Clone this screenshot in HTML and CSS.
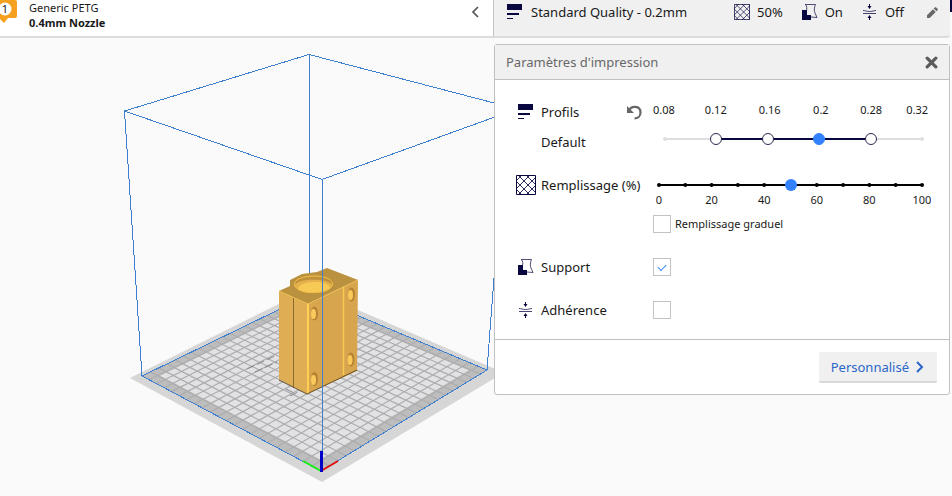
FILE: index.html
```html
<!DOCTYPE html>
<html lang="fr">
<head>
<meta charset="utf-8">
<meta name="viewport" content="width=device-width, initial-scale=1">
<title>Paramètres d'impression</title>
<link rel="stylesheet" href="styles.css">
</head>
<body>
<svg class="symbols" aria-hidden="true">
  <symbol id="i-profile" viewBox="0 0 16 16"><path d="M0 0h15v6H0zM0 9h12v2H0zM0 14h6v1H0z"/></symbol>
  <symbol id="i-infill" viewBox="0 0 20 20"><g fill="none" stroke="currentColor"><path d="M.5.5h19v19H.5z"/><path d="M0 6 6 0M0 14 14 0M2 20 20 2M10 20l10-10M18 20l2-2M0 14l6 6M0 6l14 14M2 0l18 18M10 0l10 10M18 0l2 2" stroke-opacity=".85"/></g></symbol>
  <symbol id="i-support" viewBox="0 0 16 16"><path d="M0 6h5v5h4v5H0z"/><path d="M3 .5h10.500c-1.500 3-1.500 6.500-.5 8.500l2 4.500-6-.5M3.500.5c1.500 2 1.500 4 1 6" fill="none" stroke="currentColor" stroke-opacity=".7"/></symbol>
  <symbol id="i-adhesion" viewBox="0 0 16 16"><path d="M1 6.500c2 0 3.500 1 6.500 1s4.500-1 6.500-1M1 9.500h13" fill="none" stroke="currentColor" stroke-opacity=".75"/><path d="M7 0h1v2h1.500l-2 3-2-3H7zM7 16h1v-2h1.500l-2-3-2 3H7z"/></symbol>
</svg>

<header class="topbar">
  <div class="material">
    <span class="extruder"><svg viewBox="0 0 24 24"><path d="M0 0h22a2 2 0 0 1 2 2v14a2 2 0 0 1-2 2h-7l-4 5-5-5H0z" fill="#f5a01e"/><circle cx="12" cy="9" r="6.500" fill="#fff"/></svg><b>1</b></span>
    <div class="material-text"><span>Generic PETG</span><strong>0.4mm Nozzle</strong></div>
    <button class="plain collapse" aria-label="Réduire"><svg viewBox="0 0 8 12"><path d="M7 1 2 6l5 5" fill="none" stroke="#555" stroke-width="1.700"/></svg></button>
  </div>
  <div class="summary">
    <svg class="icon"><use href="#i-profile"/></svg>
    <span class="quality">Standard Quality - 0.2mm</span>
    <span class="stat"><svg class="icon"><use href="#i-infill"/></svg>50%</span>
    <span class="stat"><svg class="icon"><use href="#i-support"/></svg>On</span>
    <span class="stat"><svg class="icon"><use href="#i-adhesion"/></svg>Off</span>
    <button class="plain edit" aria-label="Modifier"><svg viewBox="0 0 12 12"><path d="M0 12V9l6.500-6.500 3 3L3 12zM7.300 1.700 8.500.5a1 1 0 0 1 1.500 0L11.500 2a1 1 0 0 1 0 1.500l-1.200 1.200z" fill="#686868"/></svg></button>
  </div>
  <span class="edge-mark"></span>
</header>

<main class="stage">
  <svg class="scene" viewBox="0 38 952 458" preserveAspectRatio="xMinYMin slice" role="img" aria-label="Aperçu du modèle">
    <path d="M130 378 309 289l191 82v4L322 482z" fill="#d6d6d6"/>
    <path d="M142 376 309 295l178 75-166 101z" fill="#bdbdbd"/>
    <path id="inner" fill="#e2e2e4"/>
    <path id="grid" fill="none" stroke="#adadaf" stroke-width="1.200"/>
    <g class="volume">
      <path d="M142 376 309 295l178 75-166 101z"/>
      <path d="M309.500 54v241"/>
      <path d="M124.500 111 309 54.500 517 109 322 179.500z"/>
      <path d="M124.500 111 142 376M507 107 487 370"/>
    </g>
    <path d="M247 369l30-14m-22 17 22-10M286 389l10 5m-6 2 12-6" fill="none" stroke="#85878a" stroke-dasharray="8 3"/>
    <g>
      <path d="M279 291l11-5v-6l12-6 15-2 10-4 31 12-51 24z" fill="#b9913f"/>
      <path d="M279 291l29 13-1 90-28-15z" fill="#dfad54"/>
      <path d="M308 304l50-24-1 91-50 23z" fill="#d8a54f"/>
      <path d="M279 291l29 13 50-24" fill="none" stroke="#efbd50"/>
      <ellipse cx="313.500" cy="284" rx="19" ry="8.500" fill="#e5b14c"/>
      <path d="M295 282c0-8 37-8 37 0v3c-3-7-34-7-37 0z" fill="#c0913c"/>
      <path d="M298 289c2-9 30-9 32-1-5 6-26 7-32 1z" fill="#f7ca56"/>
      <path d="M294.500 284c0-10 38-11 38 0 0 11-38 12-38 0z" fill="none" stroke="#f0bd4b"/>
      <path d="M308 304v89" fill="none" stroke="#ffd054" stroke-width="2"/>
      <path d="M343.500 287v88" fill="none" stroke="#f9c851" stroke-width="1.500"/>
      <path d="M293.500 298v90" fill="none" stroke="#8d6b31"/>
      <path d="M279 380l28 14 50-24" fill="none" stroke="#675128"/>
      <g fill="#b68332"><ellipse cx="314.500" cy="313.500" rx="3.500" ry="7"/><ellipse cx="351.500" cy="294.500" rx="3.500" ry="7"/><ellipse cx="314.500" cy="379" rx="3.500" ry="7"/><ellipse cx="351" cy="359.500" rx="3.500" ry="7"/></g>
      <g fill="#f9ca5b"><ellipse cx="313.500" cy="314" rx="2.500" ry="5"/><ellipse cx="350.500" cy="295" rx="2.500" ry="5"/><ellipse cx="313.500" cy="380" rx="2.500" ry="5"/><ellipse cx="350" cy="360" rx="2.500" ry="5"/></g>
    </g>
    <path d="M322.500 179v292" class="volume"/>
    <g fill="none"><path d="M321 471l-18-10" stroke="#10f010" stroke-width="2"/><path d="M321 471l17-10" stroke="#e01010" stroke-width="2"/><path d="M321.500 472v-21" stroke="#0000c8" stroke-width="3"/></g>
  </svg>

  <section class="panel" aria-labelledby="panel-title">
    <div class="panel-head">
      <h1 id="panel-title">Paramètres d'impression</h1>
      <button class="plain close" aria-label="Fermer"><svg viewBox="0 0 12 12"><path d="m2 2 8 8M10 2l-8 8" stroke="#5c5c5c" stroke-width="3" stroke-linecap="round"/></svg></button>
    </div>
    <form class="settings">
      <div class="row">
        <svg class="icon"><use href="#i-profile"/></svg>
        <div class="names">
          <div class="name-line">Profils<button type="button" class="plain undo" aria-label="Réinitialiser"><svg viewBox="0 0 15 15"><path d="M2 5.500C4 .5 13.500 0 13.500 7.500c0 4-3 6-6 6" fill="none" stroke="#666" stroke-width="2.200"/><path d="M0 1v7h7z" fill="#666"/></svg></button></div>
          <div class="name-line">Default</div>
        </div>
        <div class="control">
          <div class="profile-scale"><span>0.08</span><span>0.12</span><span>0.16</span><span>0.2</span><span>0.28</span><span>0.32</span></div>
          <div class="profile-track" role="radiogroup" aria-label="Profils">
            <input type="radio" name="profile" aria-label="0.08" disabled>
            <input type="radio" name="profile" aria-label="0.12">
            <input type="radio" name="profile" aria-label="0.16">
            <input type="radio" name="profile" aria-label="0.2" checked>
            <input type="radio" name="profile" aria-label="0.28">
            <input type="radio" name="profile" aria-label="0.32" disabled>
          </div>
        </div>
      </div>
      <div class="row infill">
        <svg class="icon large"><use href="#i-infill"/></svg>
        <label class="name-line" for="infill">Remplissage (%)</label>
        <div class="control">
          <div class="range">
            <svg class="ticks" aria-hidden="true"></svg>
            <input type="range" id="infill" min="0" max="100" step="10" value="50">
          </div>
          <div class="infill-scale"><span>0</span><span>20</span><span>40</span><span>60</span><span>80</span><span>100</span></div>
          <label class="gradual"><input type="checkbox">Remplissage graduel</label>
        </div>
      </div>
      <div class="row">
        <svg class="icon"><use href="#i-support"/></svg>
        <label class="name-line" for="support">Support</label>
        <input type="checkbox" id="support" checked>
      </div>
      <div class="row">
        <svg class="icon"><use href="#i-adhesion"/></svg>
        <label class="name-line" for="adhesion">Adhérence</label>
        <input type="checkbox" id="adhesion">
      </div>
    </form>
    <div class="panel-foot">
      <button class="custom">Personnalisé<svg viewBox="0 0 8 12"><path d="m1 1 5 5-5 5" fill="none" stroke="#2a66c8" stroke-width="2"/></svg></button>
    </div>
  </section>
</main>
<script src="grid.js"></script>
</body>
</html>
```
FILE: styles.css
```css
* { box-sizing: border-box; }

body {
  margin: 0;
  min-height: 100vh;
  display: flex;
  flex-direction: column;
  background: #fafafa;
  color: #191919;
  font: 13px/18px "Noto Sans", sans-serif;
  overflow: hidden;
}

.symbols { position: absolute; width: 0; height: 0; }
.icon { width: 16px; height: 16px; color: #08073f; fill: #08073f; flex: none; }
.icon.large { width: 20px; height: 20px; }
.plain { border: 0; padding: 0; background: none; display: flex; }

.topbar {
  position: relative;
  display: grid;
  grid-template-columns: minmax(0, 1fr) 457px;
  height: 38px;
  padding-right: 2px;
}
.material, .summary { display: flex; border-bottom: 2px solid #dcdcdc; }
.material { background: #fff; padding-right: 14px; }
.extruder { position: relative; width: 24px; height: 24px; margin-left: -7px; }
.extruder svg { display: block; width: 24px; height: 24px; }
.extruder b {
  position: absolute;
  inset: 0 0 auto;
  text-align: center;
  font-size: 11px;
  font-weight: 400;
}
.material-text {
  display: flex;
  flex-direction: column;
  margin: 0 auto 0 12px;
  font-size: 11px;
  line-height: 15px;
}
.collapse { align-self: flex-start; margin-top: 6px; }
.collapse svg { width: 8px; height: 12px; }
.summary {
  align-items: flex-start;
  padding: 3px 12px 0 13px;
  background: #f0f0f0;
  border-left: 1px solid #c3c3c3;
  border-bottom-right-radius: 3px;
}
.quality { margin: 0 auto 0 8px; }
.summary .icon { margin-top: 1px; }
.stat { display: flex; gap: 7px; margin-right: 19px; }
.edit { margin: 4px 0 0 4px; }
.edit svg { width: 11px; height: 11px; }
.edge-mark { position: absolute; top: 0; right: 0; width: 2px; height: 12px; background: #08073f; }

.stage { flex: 1; display: grid; grid-template-columns: minmax(0, 1fr) 456px; padding-right: 2px; }
.scene { grid-area: 1 / 1 / 2 / 3; width: 100vw; height: 100%; min-height: 458px; }
.volume { fill: none; stroke: #3f7fd0; shape-rendering: crispEdges; }

.panel {
  grid-area: 1 / 2;
  align-self: start;
  margin-top: 6px;
  background: #fff;
  border: 1px solid #c0c0c0;
  border-radius: 3px;
  z-index: 1;
}
.panel-head {
  display: flex;
  align-items: center;
  justify-content: space-between;
  height: 35px;
  padding: 0 11px;
  background: #f0f0f0;
  border-bottom: 1px solid #c0c0c0;
}
.panel-head h1 { margin: 0; font-size: 13px; font-weight: 400; color: #686868; }
.close svg { width: 13px; height: 13px; }

.settings { display: flex; flex-direction: column; gap: 13px; padding: 17px 21px 14px; }
.row {
  display: grid;
  grid-template-columns: 20px 107px minmax(0, 1fr);
  column-gap: 5px;
  align-items: start;
}
.row > .icon { justify-self: center; margin-top: 7px; }
.row > .icon.large { margin-top: 5px; }
.name-line { display: flex; align-items: center; height: 30px; white-space: nowrap; }
.names .name-line { justify-content: space-between; padding-right: 6px; }
.undo svg { width: 15px; height: 15px; }
.row > input { margin-top: 6px; }

.profile-scale {
  display: grid;
  grid-template-columns: 36fr 54fr 54fr 49fr 52fr 31fr;
  padding-bottom: 8px;
  font-size: 11px;
  line-height: 26px;
  text-align: center;
}
.profile-scale span:first-child { text-align: left; }
.profile-scale span:last-child { text-align: right; }
.profile-track {
  display: flex;
  justify-content: space-between;
  align-items: center;
  height: 16px;
  margin-left: 6px;
  background:
    linear-gradient(#08073f, #08073f) center / 60% 2px no-repeat,
    linear-gradient(#dedede, #dedede) center / 96% 2px no-repeat;
}
input { appearance: none; margin: 0; flex: none; }
input[type="radio"] {
  width: 12px;
  height: 12px;
  background: #fff;
  border: 1px solid #2a2952;
  border-radius: 50%;
}
input[type="radio"]:checked { background: #3282ff; border-color: #3282ff; }
input[type="radio"]:disabled { border: 4px solid transparent; background: #dedede padding-box; }

.infill .control { padding-top: 8px; }
.infill { min-height: 69px; }
.range { display: grid; height: 14px; }
.range > * { grid-area: 1 / 1; }
.ticks { width: 100%; height: 14px; fill: none; overflow: visible; }
.ticks line { stroke: #000; stroke-width: 2; }
.ticks circle { fill: #000; }
input[type="range"] { width: 100%; height: 14px; background: none; z-index: 1; }
input[type="range"]::-webkit-slider-thumb {
  appearance: none;
  width: 12px;
  height: 12px;
  border-radius: 50%;
  background: #3282ff;
}
.infill-scale {
  display: flex;
  justify-content: space-between;
  margin: 0 -6px 6px;
  font-size: 11px;
  line-height: 16px;
}
.infill-scale span { width: 24px; text-align: center; }
.gradual { display: flex; align-items: center; gap: 4px; height: 20px; font-size: 11px; }
input[type="checkbox"] {
  display: grid;
  place-items: center;
  width: 18px;
  height: 18px;
  border: 1px solid #c3c3c3;
  background: #fff;
}
input[type="checkbox"]:checked::before {
  content: "";
  width: 7px;
  height: 4px;
  margin-bottom: 2px;
  border: solid #3282ff;
  border-width: 0 0 1px 1px;
  transform: rotate(-45deg);
}

.panel-foot { display: flex; justify-content: flex-end; padding: 12px 12px 11px; border-top: 1px solid #c0c0c0; }
.custom {
  display: flex;
  align-items: center;
  gap: 7px;
  height: 31px;
  padding: 0 13px 0 12px;
  border: 0;
  border-bottom: 2px solid #d8d8d8;
  border-radius: 2px;
  background: #f0f0f0;
  color: #2a66c8;
  font: inherit;
}
.custom svg { width: 8px; height: 12px; }
```
FILE: grid.js
```js
// Projects the build plate's unit square to its four corners on screen.
const front = [321, 471], right = [487, 370], back = [309, 295], left = [142, 376];
const CELLS = 22, MARGIN = 1.15 / CELLS;

const d1 = [right[0] - back[0], right[1] - back[1]];
const d2 = [left[0] - back[0], left[1] - back[1]];
const s = [0, 1].map(i => front[i] - right[i] + back[i] - left[i]);
const det = d1[0] * d2[1] - d2[0] * d1[1];
const g = (s[0] * d2[1] - d2[0] * s[1]) / det;
const h = (d1[0] * s[1] - s[0] * d1[1]) / det;

function project(u, v) {
  const w = g * u + h * v + 1;
  return [0, 1].map(i =>
    ((right[i] - front[i] + g * right[i]) * u + (left[i] - front[i] + h * left[i]) * v + front[i]) / w
  ).map(n => n.toFixed(1)).join(" ");
}

let lines = "";
for (let i = 1; i < CELLS; i++) {
  const t = i / CELLS;
  lines += `M${project(t, 0)}L${project(t, 1)}M${project(0, t)}L${project(1, t)}`;
}
document.getElementById("grid").setAttribute("d", lines);

const a = MARGIN, b = 1 - MARGIN;
document.getElementById("inner").setAttribute("d",
  `M${project(a, a)}L${project(b, a)}L${project(b, b)}L${project(a, b)}z`);

// One tick for each step of the infill slider, inset by half a thumb.
const ticks = document.querySelector(".ticks");
const THUMB = 12;
function drawTicks() {
  const span = ticks.getBoundingClientRect().width - THUMB;
  const start = THUMB / 2;
  let marks = `<line x1="${start}" x2="${start + span}" y1="7" y2="7"/>`;
  for (let i = 0; i <= 10; i++) marks += `<circle cx="${start + span * i / 10}" cy="7" r="2"/>`;
  ticks.innerHTML = marks;
}
drawTicks();
addEventListener("resize", drawTicks);
```
